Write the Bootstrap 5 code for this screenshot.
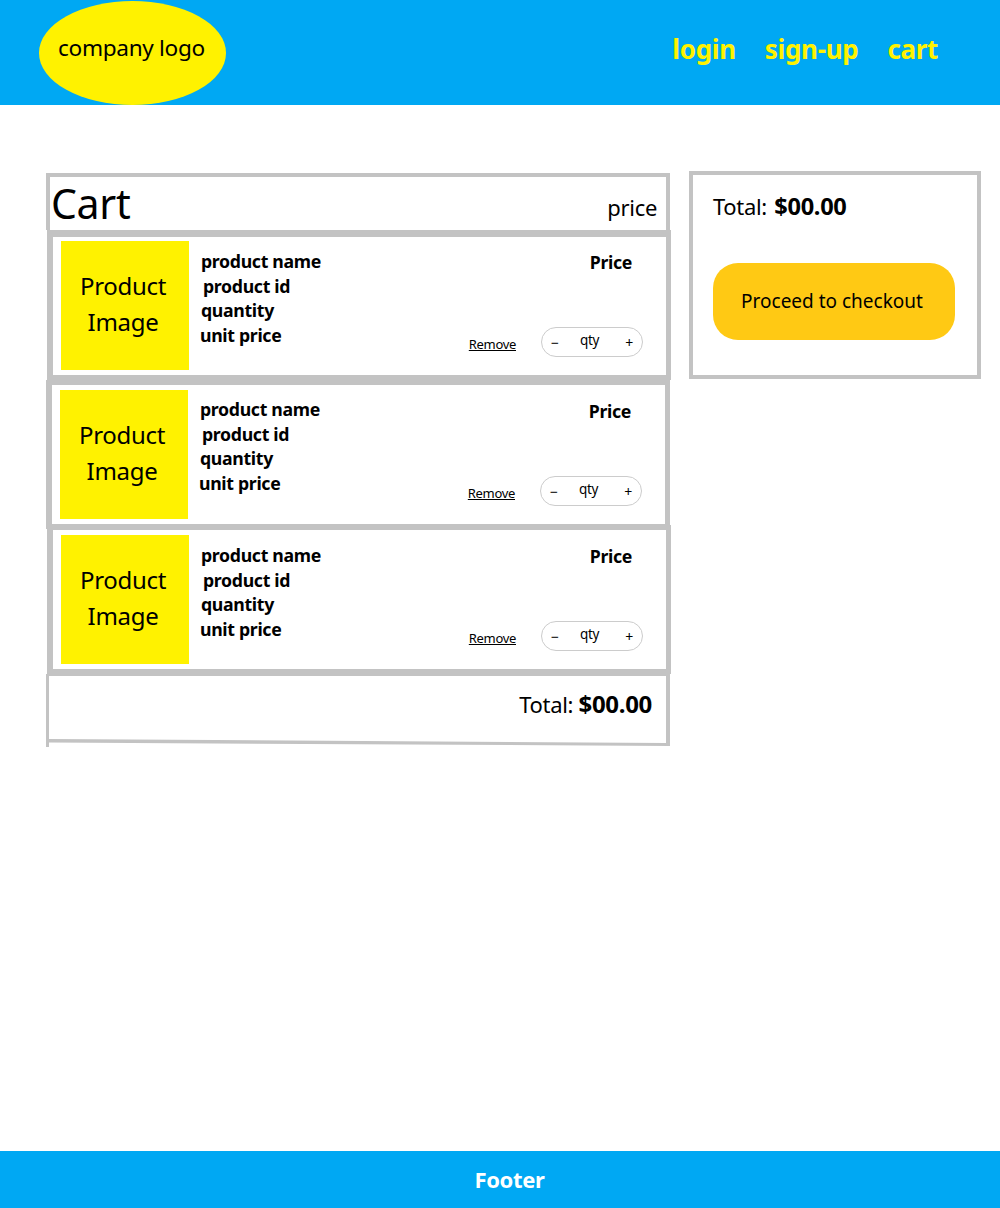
<!DOCTYPE html>
<html lang="en">
<head>
<meta charset="UTF-8">
<meta name="viewport" content="width=device-width, initial-scale=1.0">
<title>Cart</title>
<link href="https://cdn.jsdelivr.net/npm/bootstrap@5.3.0/dist/css/bootstrap.min.css" rel="stylesheet">
<style>
    body {
        font-family: "Noto Sans", "Open Sans", sans-serif;
        color: #000;
        letter-spacing: -0.02em;
    }

    /* header */
    .site-head {
        background-color: #00a8f3;
        height: 105px;
        padding-left: 39px;
        padding-right: 62px;
    }
    .logo-oval {
        width: 187px;
        height: 104px;
        margin-top: 1px;
        border-radius: 50%;
        background-color: #fff200;
        font-size: 22.6px;
        padding: 0 2px 10px 0;
    }
    .head-nav { gap: 29px; padding-bottom: 6px; }
    .head-link {
        color: #fff200;
        font-size: 26px;
        font-weight: 700;
        text-decoration: none;
    }

    /* layout */
    .page-body {
        padding: 66px 19px 0 46px;
    }
    .cart-col { width: 624px; }
    .side-col { width: 292px; margin-left: 19px; }

    /* cart */
    .cart-top {
        height: 57px;
        margin-top: 2px;
        border: 4px solid #c3c3c3;
        border-bottom: 0;
        padding: 0 9px 0 1px;
    }
    .cart-title {
        font-size: 41px;
        line-height: 52px;
        font-weight: 400;
        margin: 0;
    }
    .cart-price { font-size: 22px; line-height: 28px; padding-top: 16px; }

    .cart-item {
        border: solid #c3c3c3;
        border-width: 5px 5px 5px 6px;
        margin-left: 1px;
        margin-right: -1px;
        height: 149px;
        padding: 5px 23px 0 8px;
    }
    .cart-item.first-item { border-top-width: 7px; height: 150px; padding-top: 4px; }
    .cart-item.second-item { margin: 0; }
    .cart-item.third-item { margin-top: -4px; }
    .item-pic {
        width: 128px;
        height: 129px;
        background-color: #fff200;
        font-size: 24px;
        line-height: 36px;
        padding: 0 4px 4px 0;
    }
    .item-info {
        font-size: 17.7px;
        font-weight: 700;
        line-height: 24.7px;
        padding: 8px 0 0 12px;
    }
    .second-item .item-info { padding-top: 7px; }
    .line-id { margin-left: 2px; }
    .line-unit { margin-left: -1px; }
    .item-end { padding-bottom: 18px; }
    .item-price { font-size: 17.7px; font-weight: 700; line-height: 24px; padding: 9px 11px 0 0; }
    .remove-link { color: #000; font-size: 13px; margin-right: 25px; padding-top: 5px; }
    .qty-box {
        width: 102px;
        height: 30px;
        border: 1px solid #ccc;
        border-radius: 15px;
        font-size: 14px;
        padding: 0 9px;
    }
    .qty-text { font-size: 13.5px; padding: 0 5px 3px 0; }
    .cart-total {
        height: 65px;
        border: solid #c3c3c3;
        border-width: 2px 4px 0 3px;
        font-size: 22px;
        line-height: 34px;
        padding: 11px 14px 0 0;
    }
    .big-amount { font-size: 24px; }
    .slant-line { display: block; }

    /* summary */
    .side-box {
        height: 208px;
        border: 4px solid #c3c3c3;
        padding: 17px 22px 0 20px;
    }
    .side-total { font-size: 22px; line-height: 28px; margin-bottom: 43px; }
    .side-total .big-amount { font-size: 23.6px; margin-left: 2px; }
    .checkout-btn {
        background-color: #ffc914;
        border-radius: 25px;
        height: 77px;
        font-size: 19px;
        color: #000;
        padding-right: 16px;
    }
    .checkout-btn:hover { background-color: #ffc914; color: #000; }

    /* footer */
    .site-foot {
        background-color: #00a8f3;
        height: 57px;
        color: #fff;
        font-size: 22px;
        font-weight: 700;
        padding-left: 19px;
    }
</style>
</head>
<body class="d-flex flex-column min-vh-100">

<header class="site-head d-flex justify-content-between align-items-center">
    <div class="logo-oval d-flex justify-content-center align-items-center align-self-start">company logo</div>
    <nav class="head-nav d-flex">
        <a class="head-link" href="#">login</a>
        <a class="head-link" href="#">sign-up</a>
        <a class="head-link" href="#">cart</a>
    </nav>
</header>

<main class="page-body d-flex align-items-start">
    <section class="cart-col">
        <div class="cart-top d-flex justify-content-between">
            <h1 class="cart-title">Cart</h1>
            <span class="cart-price">price</span>
        </div>

        <div class="cart-item first-item d-flex">
            <div class="item-pic d-flex justify-content-center align-items-center text-center">Product<br>Image</div>
            <div class="item-info flex-grow-1">product name<div class="line-id">product id</div>quantity<div class="line-unit">unit price</div></div>
            <div class="item-end d-flex flex-column justify-content-between align-items-end">
                <div class="item-price">Price</div>
                <div class="d-flex align-items-center">
                    <a class="remove-link" href="#">Remove</a>
                    <div class="qty-box d-flex justify-content-between align-items-center"><span>&minus;</span><span class="qty-text">qty</span><span>+</span></div>
                </div>
            </div>
        </div>

        <div class="cart-item second-item d-flex">
            <div class="item-pic d-flex justify-content-center align-items-center text-center">Product<br>Image</div>
            <div class="item-info flex-grow-1">product name<div class="line-id">product id</div>quantity<div class="line-unit">unit price</div></div>
            <div class="item-end d-flex flex-column justify-content-between align-items-end">
                <div class="item-price">Price</div>
                <div class="d-flex align-items-center">
                    <a class="remove-link" href="#">Remove</a>
                    <div class="qty-box d-flex justify-content-between align-items-center"><span>&minus;</span><span class="qty-text">qty</span><span>+</span></div>
                </div>
            </div>
        </div>

        <div class="cart-item third-item d-flex">
            <div class="item-pic d-flex justify-content-center align-items-center text-center">Product<br>Image</div>
            <div class="item-info flex-grow-1">product name<div class="line-id">product id</div>quantity<div class="line-unit">unit price</div></div>
            <div class="item-end d-flex flex-column justify-content-between align-items-end">
                <div class="item-price">Price</div>
                <div class="d-flex align-items-center">
                    <a class="remove-link" href="#">Remove</a>
                    <div class="qty-box d-flex justify-content-between align-items-center"><span>&minus;</span><span class="qty-text">qty</span><span>+</span></div>
                </div>
            </div>
        </div>

        <div class="cart-total text-end">Total: <strong class="big-amount">$00.00</strong></div>
        <svg class="slant-line" width="624" height="8" viewBox="0 0 624 8">
            <path d="M0 0 H3 L620 4 V0 H624 V7 L3 3.5 V8 H0 Z" fill="#c3c3c3"/>
        </svg>
    </section>

    <aside class="side-col">
        <div class="side-box">
            <div class="side-total">Total: <strong class="big-amount">$00.00</strong></div>
            <button type="button" class="btn checkout-btn w-100 border-0">Proceed to checkout</button>
        </div>
    </aside>
</main>

<footer class="site-foot mt-auto d-flex justify-content-center align-items-center">Footer</footer>

<script src="https://cdn.jsdelivr.net/npm/bootstrap@5.3.0/dist/js/bootstrap.bundle.min.js"></script>
</body>
</html>
